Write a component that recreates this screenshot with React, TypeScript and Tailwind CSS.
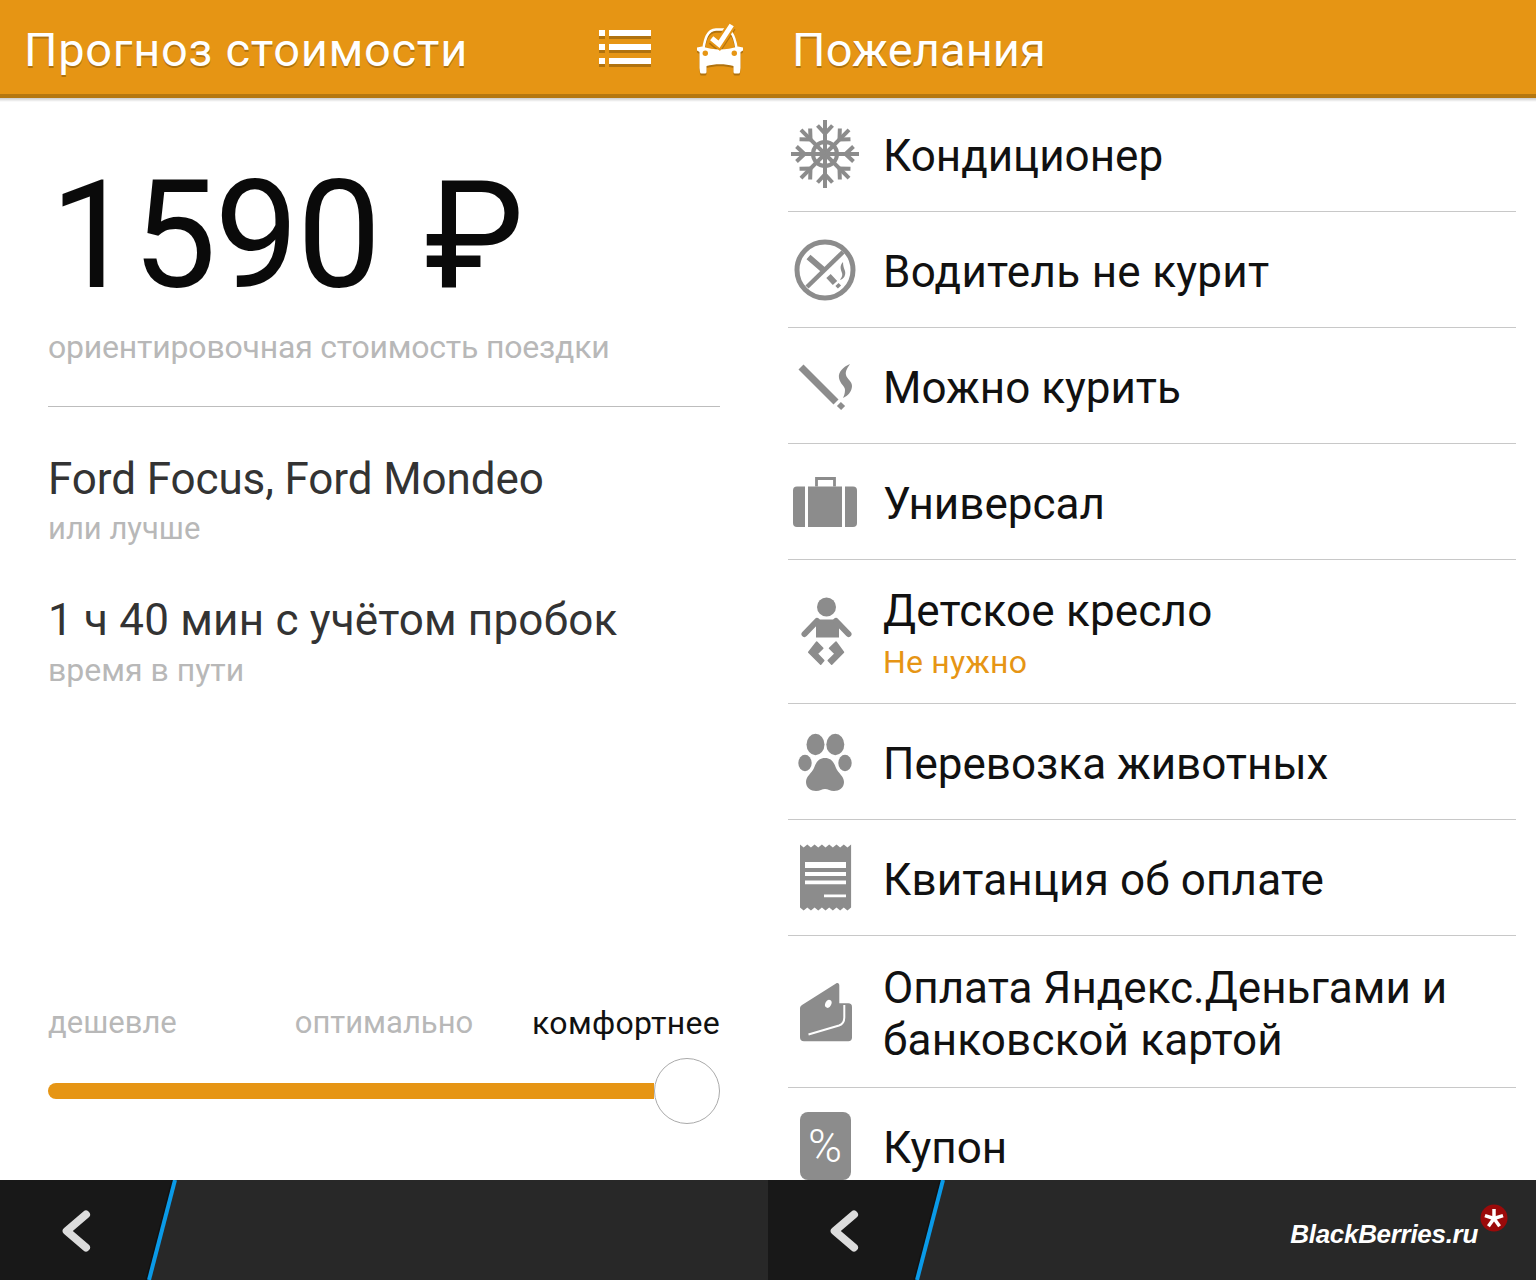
import React from 'react';

const GRAY = '#8c8c8c';

const Snowflake = () => (
  <svg width="74" height="74" viewBox="0 0 74 74" fill="none" stroke={GRAY} strokeWidth="4">
    <circle cx="37" cy="37" r="12" />
    {[0, 45, 90, 135, 180, 225, 270, 315].map((a) => (
      <g key={a} transform={`rotate(${a} 37 37)`}>
        <path d="M37 37V3" />
        <path d="M29.500 8.500l7.500 8 7.500-8" />
      </g>
    ))}
  </svg>
);

const NoSmoking = () => (
  <svg width="74" height="74" viewBox="0 0 74 74" fill="none" stroke={GRAY}>
    <circle cx="37" cy="37" r="28" strokeWidth="5" />
    <path d="M55 19L19 54" strokeWidth="4.500" />
    <path d="M20.500 24l15 13M40.500 43l6.500 7" strokeWidth="6" />
    <path d="M49 51.500l2.500 2.500" strokeWidth="4.500" />
    <path d="M55 29c-4 4-2 8-1 11 1 3-1 5-2 7 4-1 6-5 5-9-1-3-2-5-2-9z" fill={GRAY} stroke="none" />
  </svg>
);

const Smoking = () => (
  <svg width="74" height="74" viewBox="0 0 74 74" fill="none" stroke={GRAY}>
    <path d="M13 18l35 35" strokeWidth="7" />
    <path d="M51 59l4-4" strokeWidth="6" />
    <path d="M62 15c-7 3-12 8-11 14 1 6 6 8 6 12 0 3-1 6-2 8 5-2 9-7 9-12 0-5-5-7-6-11-1-4 2-8 4-11z" fill={GRAY} stroke="none" />
  </svg>
);

const Suitcase = () => (
  <svg width="74" height="74" viewBox="0 0 74 74" fill={GRAY}>
    <path d="M9 21.500h8V62H9a4 4 0 0 1-4-4V25.500a4 4 0 0 1 4-4z" />
    <rect x="20" y="21.500" width="34" height="40.500" />
    <path d="M57 21.500h8a4 4 0 0 1 4 4V58a4 4 0 0 1-4 4h-8z" />
    <path d="M28.500 21.500v-8h18v8" fill="none" stroke={GRAY} strokeWidth="2.800" />
  </svg>
);

const Baby = () => (
  <svg width="74" height="74" viewBox="0 0 74 74" fill={GRAY}>
    <circle cx="38.500" cy="12" r="9.500" />
    <path d="M29 24.500h19l3 3v15H28V27.500z" />
    <path d="M29 26L16.500 39M48 26l12.500 13" fill="none" stroke={GRAY} strokeWidth="6" strokeLinecap="round" />
    <path
      d="M28.700 47l6.100 6.200-5.500 5.600 6.500 6.700-3.100 3.800-12-12.100zM48 47l7.500 10.200-11.800 12.100-3.500-3.800 6.800-6.700-5.500-5.600z"
      stroke={GRAY}
      strokeWidth="1.500"
      strokeLinejoin="round"
    />
  </svg>
);

const Paw = () => (
  <svg width="74" height="74" viewBox="0 0 74 74" fill={GRAY}>
    <ellipse cx="27.500" cy="19.500" rx="9" ry="10.700" />
    <ellipse cx="47.300" cy="19.500" rx="9" ry="10.700" />
    <ellipse cx="17" cy="38" rx="6.700" ry="8.300" />
    <ellipse cx="57" cy="38" rx="6.700" ry="8.300" />
    <path d="M37 33c6 0 9 4 11 10 2 5 8 8 8 14 0 6-5 9-10 9-4 0-6-2-9-2s-5 2-9 2c-5 0-10-3-10-9 0-6 6-9 8-14 2-6 5-10 11-10z" />
  </svg>
);

const Receipt = () => (
  <svg width="74" height="74" viewBox="0 0 74 74">
    <path
      fill={GRAY}
      d="M12 3.500l3.650 3 3.650-3 3.650 3 3.650-3 3.650 3 3.650-3 3.650 3 3.650-3 3.650 3 3.650-3 3.650 3 3.650-3 3.650 3 3.650-3V66.500l-3.650 3-3.650-3-3.650 3-3.650-3-3.650 3-3.650-3-3.650 3-3.650-3-3.650 3-3.650-3-3.650 3-3.650-3-3.650 3-3.650-3z"
    />
    <path fill="#fff" d="M17 21h41v6H17zM17 31h41v4H17zM17 39.500h41v3.700H17zM36 53.500h22v2.800H36z" />
  </svg>
);

const Wallet = () => (
  <svg width="74" height="74" viewBox="0 0 74 74">
    <path
      fill={GRAY}
      d="M12 33a4 4 0 0 1 2-3l34-21.500c2-1 3.300 0 3.300 2V28.200h9a3.700 3.700 0 0 1 3.700 3.700v30.600a3.700 3.700 0 0 1-3.700 3.700H16a4 4 0 0 1-4-4z"
    />
    <path d="M20.500 59.500L51 50.500c3-1 5.300-3 5.300-8V30" fill="none" stroke="#fff" strokeWidth="2" />
    <ellipse cx="40.300" cy="28.800" rx="3" ry="4.200" transform="rotate(25 40.300 28.800)" fill="#fff" />
  </svg>
);

const ListIcon = () => (
  <svg width="52" height="34" viewBox="0 0 52 34" fill="#fff" className="drop-shadow-[0_3px_0_#b0720e]">
    <path d="M0 0h6v6H0zM10 0h42v6H10zM0 14h6v6H0zM10 14h42v6H10zM0 28h6v6H0zM10 28h42v6H10z" />
  </svg>
);

const CarIcon = () => (
  <svg width="52" height="56" viewBox="0 0 52 56" className="drop-shadow-[0_2px_0_#b0720e]">
    <path d="M9.500 29C11 20 13 11 22 10.500h8c6 0 10 3 12.500 18.500" fill="none" stroke="#fff" strokeWidth="2.500" />
    <path
      fill="#fff"
      d="M3 28.500L8 27.500C20 31.500 32 31.500 44 27.500L49 28.500V31.500L46.500 33V49L46 53a1.500 1.500 0 0 1-1.500 1.500H41A1.500 1.500 0 0 1 39.500 53V47C31 44.500 21 44.500 12.500 47V53A1.500 1.500 0 0 1 11 54.500H7.500A1.500 1.500 0 0 1 6 53L5.500 49V33L3 31.500z"
    />
    <circle cx="11.300" cy="34.300" r="2.700" fill="#e69514" />
    <circle cx="40.300" cy="34.300" r="2.700" fill="#e69514" />
    <path d="M17.700 19.300L25 25.300 37.700 6" fill="none" stroke="#e69514" strokeWidth="9" />
    <path d="M17.700 19.300L25 25.300 37.700 6" fill="none" stroke="#fff" strokeWidth="5" />
  </svg>
);

const Header = ({ title, children }: { title: React.ReactNode; children?: React.ReactNode }) => (
  <div className="relative z-10 flex h-[98px] shrink-0 items-center border-b-[4px] border-[#b5770f] bg-[#e69514]">
    <span className="ml-[24px] pt-[4px] text-[47px] leading-none text-white [text-shadow:0_2px_0_#b0720e]">{title}</span>
    {children}
    <div className="absolute top-full right-0 left-0 mt-[4px] h-[4px] bg-gradient-to-b from-black/20 to-transparent" />
  </div>
);

const BottomBar = ({ children }: { children?: React.ReactNode }) => (
  <div className="relative h-[100px] shrink-0 bg-[#282828]">
    <svg width="190" height="100" viewBox="0 0 190 100">
      <path d="M0 0H176L150 100H0z" fill="#181818" />
      <path d="M173 0L147 100" stroke="#111" strokeWidth="3" />
      <path d="M175 0L149 100" stroke="#0a9ae8" strokeWidth="4" />
      <path d="M86 34.500L66.700 51 86 67.500" fill="none" stroke="#dcdcdc" strokeWidth="8" strokeLinecap="round" strokeLinejoin="round" />
    </svg>
    {children}
  </div>
);

const Row = ({
  icon,
  title,
  sub,
  h = 'h-[116px]',
  last,
}: {
  icon: React.ReactNode;
  title: React.ReactNode;
  sub?: string;
  h?: string;
  last?: boolean;
}) => (
  <div className={`flex shrink-0 items-center ${h} ${last ? '' : 'border-b border-[#c8c8c8]'}`}>
    <div className="mr-[21px] flex w-[74px] shrink-0 justify-center">{icon}</div>
    <div className="pt-[4px]">
      <div className="text-[44px] leading-[52px] text-[#111]">{title}</div>
      {sub && <div className="mt-[5px] text-[32px] leading-[40px] tracking-[0.2px] text-[#e69514]">{sub}</div>}
    </div>
  </div>
);

export default function App() {
  return (
    <div className="flex h-[1280px] w-[1536px] overflow-hidden bg-white font-['Roboto',sans-serif]">
      {/* LEFT: estimate */}
      <div className="flex w-[768px] flex-col">
        <Header title={<span className="tracking-[0.7px]">Прогноз стоимости</span>}>
          <div className="mr-[22px] ml-auto flex items-center gap-[43px]">
            <ListIcon />
            <CarIcon />
          </div>
        </Header>
        <div className="flex flex-1 flex-col px-[48px]">
          <div className="mt-[58px] h-[160px] pl-[2px] text-[150px] leading-[160px] whitespace-nowrap text-[#0a0a0a]">
            <span className="tracking-[-2px]">1590 </span>
            <span className="ml-[10px]">₽</span>
          </div>
          <div className="mt-[11px] border-b border-[#bdbdbd] pb-[39px] text-[32px] leading-[40px] tracking-[-0.2px] text-[#b8b8b8]">
            ориентировочная стоимость поездки
          </div>
          <div className="mt-[46px] text-[44px] leading-[52px] tracking-[-0.1px] text-[#333]">Ford Focus, Ford Mondeo</div>
          <div className="mt-[4px] text-[31px] leading-[40px] text-[#b8b8b8]">или лучше</div>
          <div className="mt-[45px] text-[44px] leading-[52px] tracking-[0.2px] text-[#333]">1 ч 40 мин с учётом пробок</div>
          <div className="mt-[4px] text-[32px] leading-[40px] text-[#b8b8b8]">время в пути</div>

          <div className="mt-auto mb-[56px]">
            <div className="grid grid-cols-3 text-[31px] leading-[40px] text-[#b8b8b8]">
              <span>дешевле</span>
              <span className="text-center">оптимально</span>
              <span className="text-right text-[32px] tracking-[0.3px] whitespace-nowrap text-[#111]">комфортнее</span>
            </div>
            <div className="mt-[15px] flex items-center">
              <div className="h-[16px] flex-1 rounded-l-full bg-[#e69514]" />
              <div className="h-[66px] w-[66px] rounded-full border border-[#aaaaaa] bg-white" />
            </div>
          </div>
        </div>
        <BottomBar />
      </div>

      {/* RIGHT: wishes */}
      <div className="flex w-[768px] flex-col">
        <Header title={<span className="tracking-[0.1px]">Пожелания</span>} />
        <div className="flex flex-1 flex-col overflow-hidden px-[20px]">
          <Row icon={<Snowflake />} title="Кондиционер" h="h-[114px] pb-[2px]" />
          <Row icon={<NoSmoking />} title={<span className="tracking-[0.3px]">Водитель не курит</span>} />
          <Row icon={<Smoking />} title="Можно курить" />
          <Row icon={<Suitcase />} title="Универсал" />
          <Row icon={<Baby />} title={<span className="tracking-[0.2px]">Детское кресло</span>} sub="Не нужно" h="h-[144px]" />
          <Row icon={<Paw />} title="Перевозка животных" />
          <Row icon={<Receipt />} title={<span className="tracking-[0.15px]">Квитанция об оплате</span>} />
          <Row
            icon={<Wallet />}
            title={
              <>
                Оплата Яндекс.Деньгами и
                <br />
                <span className="tracking-[0.2px]">банковской картой</span>
              </>
            }
            h="h-[152px]"
          />
          <Row
            icon={
              <div className="flex h-[68px] w-[51px] items-center justify-center rounded-[8px] bg-[#8c8c8c] text-[46px] leading-none font-light text-white">
                %
              </div>
            }
            title="Купон"
            last
          />
        </div>
        <BottomBar>
          <div className="absolute top-[26px] right-[28px] flex items-start">
            <span className="mt-[13px] font-['Liberation_Sans',sans-serif] text-[26px] leading-[30px] font-bold tracking-[-0.3px] text-white italic">
              BlackBerries.ru
            </span>
            <svg width="28" height="28" viewBox="0 0 28 28" className="-mt-[2px] ml-[2px]">
              <circle cx="14" cy="14" r="13.500" fill="#9b0a0a" />
              {[0, 72, 144, 216, 288].map((a) => (
                <path key={a} d="M14 14.500V5" stroke="#fff" strokeWidth="3.500" transform={`rotate(${a} 14 14.500)`} />
              ))}
            </svg>
          </div>
        </BottomBar>
      </div>
    </div>
  );
}
